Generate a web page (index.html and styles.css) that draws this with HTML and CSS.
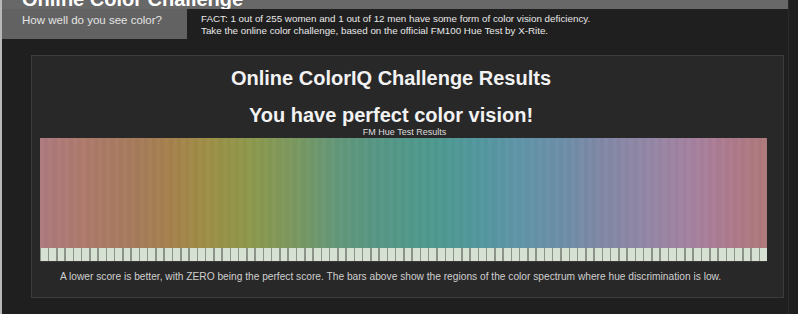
FILE: index.html
```html
<!DOCTYPE html>
<html lang="en">
<head>
    <meta charset="UTF-8">
    <title>Online Color Challenge</title>
    <link rel="stylesheet" href="styles.css">
</head>
<body>
    <div class="page">
        <header class="top">
            <h1 class="site-title">Online Color Challenge</h1>
        </header>
        <div class="subbar">
            <div class="tab">How well do you see color?</div>
            <div class="fact">
                FACT: 1 out of 255 women and 1 out of 12 men have some form of color vision deficiency.<br>
                Take the online color challenge, based on the official FM100 Hue Test by X-Rite.
            </div>
        </div>
        <div class="results">
            <div class="headings">
                <h2>Online ColorIQ Challenge Results</h2>
                <h3>You have perfect color vision!</h3>
            </div>
            <div class="chart-label">FM Hue Test Results</div>
            <div class="spectrum"></div>
            <div class="bars">
                <span></span><span></span><span></span><span></span><span></span><span></span><span></span><span></span><span></span><span></span>
                <span></span><span></span><span></span><span></span><span></span><span></span><span></span><span></span><span></span><span></span>
                <span></span><span></span><span></span><span></span><span></span><span></span><span></span><span></span><span></span><span></span>
                <span></span><span></span><span></span><span></span><span></span><span></span><span></span><span></span><span></span><span></span>
                <span></span><span></span><span></span><span></span><span></span><span></span><span></span><span></span><span></span><span></span>
                <span></span><span></span><span></span><span></span><span></span><span></span><span></span><span></span><span></span><span></span>
                <span></span><span></span><span></span><span></span><span></span><span></span><span></span><span></span><span></span><span></span>
                <span></span><span></span><span></span><span></span><span></span><span></span><span></span><span></span><span></span><span></span>
                <span></span><span></span><span></span><span></span><span></span><span></span><span></span><span></span>
            </div>
            <p class="note">A lower score is better, with ZERO being the perfect score. The bars above show the regions of the color spectrum where hue discrimination is low.</p>
        </div>
    </div>
</body>
</html>
```
FILE: styles.css
```css
body { margin: 0; background: #1f1f1f; font-family: "Liberation Sans", Arial, sans-serif; color: #ddd; overflow: hidden; }
.page { border-left: 2px solid #b8b8b8; min-height: 314px; border-right: 1px solid #2a2a2a; width: 789px; box-sizing: border-box; }

.top { background: #686868; height: 9px; overflow: hidden; }
.site-title { margin: -12px 0 0 20px; font-size: 20px; line-height: 22px; color: #fff; font-weight: bold; }

.subbar { display: flex; height: 30px; }
.tab { background: #626262; width: 185px; font-size: 11.5px; color: #e4e4e4; padding: 5px 0 0 20px; box-sizing: border-box; }
.fact { font-size: 9.8px; line-height: 12px; color: #e8e8e8; padding: 4px 0 0 14px; }

.results { margin: 16px 0 0 29px; width: 753px; height: 243px; box-sizing: border-box; background: #282828; border: 1px solid #3c3c3c; padding: 0 16px 0 8px; }
.headings { padding-right: 25px; text-align: center; color: #f2f2f2; }
.headings h2 { margin: 11px 0 0; font-size: 20px; line-height: 23px; }
.headings h3 { margin: 14px 0 0; font-size: 20px; line-height: 23px; }
.chart-label { text-align: center; font-size: 9px; line-height: 10px; color: #ddd; padding-left: 2px; }

.spectrum { height: 110px; margin-top: 1px;
    background:
        repeating-linear-gradient(90deg, rgba(255,255,255,0.015) 0 4px, rgba(0,0,0,0.015) 4px 8.3px),
        linear-gradient(90deg, #ae7a80 0%, #ae7a6c 6%, #a67b5c 13%, #a6814c 18%, #9e8f46 23%, #8d984c 29%, #7b9860 35%, #63977a 41%, #579784 46%, #4d9990 55%, #5497a0 61%, #6094a8 66%, #6d8ea8 72%, #8088a6 77%, #9486a6 84%, #a6819f 90%, #ae7a8c 95%, #ae797a 100%); }

.bars { display: flex; gap: 1.5px; height: 13px; background: #8c918a; padding-left: 1px; border-bottom: 1px solid #3a3a3a; }
.bars span { flex: 1; background: #d6e0d3; }

.note { margin: 9px 0 0 20px; font-size: 10.2px; line-height: 12px; color: #cfcfcf; }
```
